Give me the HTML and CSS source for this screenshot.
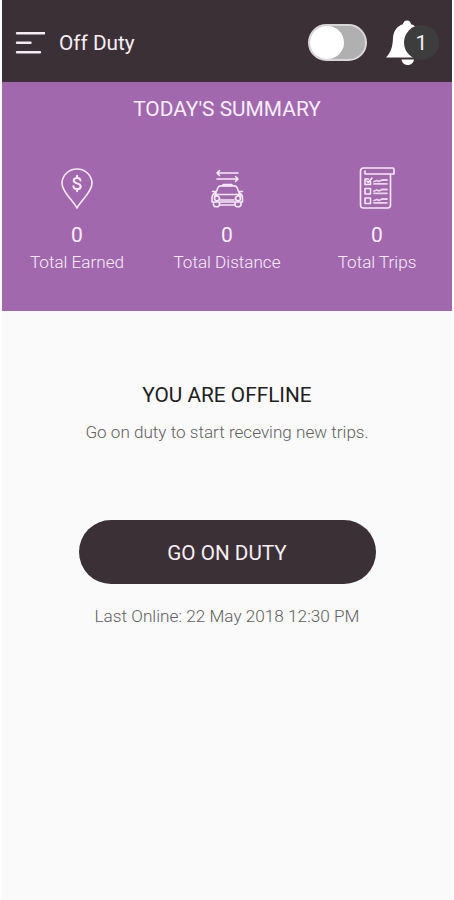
FILE: index.html
```
<!DOCTYPE html>
<html lang="en">
<head>
<meta charset="utf-8">
<title>Off Duty</title>
<link rel="stylesheet" href="styles.css">
</head>
<body>
<div class="app">
  <header class="bar">
    <svg class="menu" width="30" height="24" viewBox="0 0 30 24" fill="none" stroke="#f3eaf2" stroke-width="2.4" stroke-linecap="round"><path d="M2 2.200H29.500M2 11.700H15.500M2 21.200H25"/></svg>
    <h1 class="title">Off Duty</h1>
    <div class="switch"><span class="knob"></span></div>
    <div class="alerts">
      <svg width="42" height="46" viewBox="0 0 42 46" fill="#fff"><path d="M21 0.500c2.400 0 3.500 1.600 4.100 3.700C31 6 34.500 11 35 18c.4 9 2 14 6.500 19.500H0C5 32 6.600 27 7 18 7.500 11 11 6 16.900 4.200 17.500 2.100 18.600 .5 21 .5Z"/><path d="M15.500 39.500h12.500c-.5 3.300-3 5.500-6.300 5.500S16 42.800 15.500 39.500Z"/></svg>
      <span class="badge">1</span>
    </div>
  </header>
  <section class="summary">
    <h2 class="heading">TODAY'S SUMMARY</h2>
    <div class="stats">
      <div class="stat">
        <svg width="44" height="44" viewBox="0 0 44 44" fill="none" stroke="#f8e9f8" stroke-width="1.600" stroke-linecap="round" stroke-linejoin="round"><path d="M22 42C18 34.500 7 26 7 17.500a15 14.500 0 0 1 30 0C37 26 26 34.500 22 42Z"/><path stroke-width="2" d="M25.500 14.500c-.2-1.700-1.500-2.600-3.400-2.600s-3.400 1-3.400 2.600c0 3.800 7 2 7 5.900 0 1.700-1.500 2.700-3.600 2.700-2.200 0-3.600-1-3.700-2.900M22.100 9.800v2M22.100 23.500v1.800"/></svg>
        <span class="value">0</span><span class="label">Total Earned</span>
      </div>
      <div class="stat">
        <svg width="44" height="44" viewBox="0 0 44 44" fill="none" stroke="#f8e9f8" stroke-width="1.600" stroke-linecap="round" stroke-linejoin="round"><path d="M33 7H12M14.500 4.500L12 7l2.500 2.500M12 13h21M30.500 10.500L33 13l-2.500 2.500"/><path stroke-width="2.600" d="M18.500 19h8"/><path d="M10.500 28l2.500-6.500c.5-1.200 1.500-1.600 3-1.600h13c1.500 0 2.500.4 3 1.600l2.500 6.500M7.500 25.500h3M34.500 25.500h3M11 28.500h23M10 27c-2 1-3 2.500-3 5v4h30.500v-4c0-2.500-1-4-3-5M8.500 36v2.500q0 2.300 3 2.300t3-2.300V36M30 36v2.500q0 2.300 3 2.300t3-2.300V36M15.500 34h13.500M15 39h15"/><path stroke-width="1.800" d="M10 29.500c2 0 4.500 1 4.500 2.800S13 35 12 35s-2.500-1-2.500-2.500ZM35 29.500c-2 0-4.500 1-4.500 2.800S32 35 33 35s2.500-1 2.500-2.500Z"/></svg>
        <span class="value">0</span><span class="label">Total Distance</span>
      </div>
      <div class="stat">
        <svg width="44" height="44" viewBox="0 0 44 44" fill="none" stroke="#f8e9f8" stroke-width="1.600" stroke-linecap="round" stroke-linejoin="round"><path d="M8.500 2h29q1.500 0 1.500 1.500V8H10V5M8.500 2Q5.500 2 5.500 5v34q0 3 3 3h24q3 0 3-3V8"/><path d="M15.500 15.500V18.500H10V13h3.500M10 22.500h5.500v5.500H10ZM10 32h5.500v5.500H10ZM11.800 15l1.400 1.500 3.800-4.500"/><path stroke-width="1.800" stroke-opacity=".85" d="M19 15.500l3-1 2 1 3-1.500 5 0M19 17.800h13M19 25l3-1 2 1 3-1.500 5 0M19 27.300h13M19 34.500l3-1 2 1 3-1.500 5 0M19 36.800h13"/></svg>
        <span class="value">0</span><span class="label">Total Trips</span>
      </div>
    </div>
  </section>
  <main class="status">
    <h2 class="state">YOU ARE OFFLINE</h2>
    <p class="note">Go on duty to start receving new trips.</p>
    <button class="go">GO ON DUTY</button>
    <p class="last">Last Online: 22 May 2018 12:30 PM</p>
  </main>
</div>
</body>
</html>
```
FILE: styles.css
```
* { box-sizing: border-box; }
body { margin: 0; background: #fff; font-family: Roboto, sans-serif; }
h1, h2, p { margin: 0; font-weight: 400; white-space: nowrap; }
.app { width: 450px; height: 900px; margin: 0 auto; background: #fafafa; display: flex; flex-direction: column; }
.bar { height: 82px; background: #3c3037; display: flex; align-items: center; padding: 3px 14px 0 13px; }
.menu { flex: none; }
.title { margin-left: 14px; padding-top: 1px; font-size: 20.800px; line-height: 26px; color: #f6eff5; }
.switch { width: 59px; height: 37px; margin-left: auto; border: 2px solid #d8d6d8; border-radius: 19px; background: #b0b0b0; }
.knob { display: block; width: 34px; height: 33px; border-radius: 17px; background: #fff; }
.alerts { position: relative; width: 52px; height: 46px; margin-left: 19px; }
.alerts svg { display: block; }
.badge { position: absolute; left: 18px; top: 5px; width: 35px; height: 35px; border-radius: 50%; background: #3d3d3d; color: #f2f2f2; font-size: 21px; line-height: 36px; text-align: center; }
.summary { height: 229px; background: #a168ae; color: #faeefa; padding-top: 13px; text-align: center; }
.heading { font-size: 20.900px; line-height: 28px; }
.stats { display: grid; grid-template-columns: repeat(3, 1fr); margin-top: 43px; }
.stat { display: flex; flex-direction: column; align-items: center; }
.value { margin-top: 11px; font-size: 21px; line-height: 28px; }
.label { font-size: 17.100px; line-height: 26px; font-weight: 300; white-space: nowrap; }
.status { display: flex; flex-direction: column; align-items: center; padding-top: 70px; }
.state { font-size: 20.800px; line-height: 28px; color: #202020; }
.note { margin-top: 10px; font-size: 17.100px; line-height: 26px; font-weight: 300; color: #606060; }
.go { width: 297px; height: 64px; margin-top: 75px; padding: 1px 0 0; border: 0; border-radius: 32px; background: #3c3037; color: #f6eff5; font: 400 20.700px Roboto, sans-serif; }
.last { margin-top: 19px; font-size: 17.200px; line-height: 26px; font-weight: 300; color: #606060; }
```
